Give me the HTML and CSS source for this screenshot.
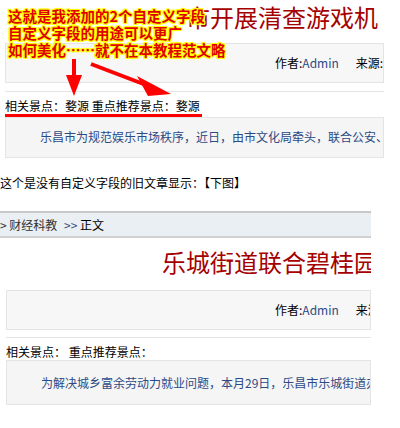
FILE: index.html
```
<!DOCTYPE html>
<html lang="zh-CN">
<head>
    <meta charset="UTF-8">
    <title>自定义字段显示</title>
    <link rel="stylesheet" href="styles.css">
</head>
<body>
<div class="page">
    <!--新文章：有自定义字段-->
    <div class="shot shot1">
        <div class="title title1">市开展清查游戏机</div>
        <div class="info info1">作者:<span class="blue">Admin</span><span class="from">来源:乐昌市文化局</span></div>
        <div class="related related1"><span class="mark">相关景点：婺源 重点推荐景点：婺源</span></div>
        <div class="content content1">乐昌市为规范娱乐市场秩序，近日，由市文化局牵头，联合公安、工商等部门</div>
    </div>

    <p class="note">这个是没有自定义字段的旧文章显示：【下图】</p>

    <!--旧文章：没有自定义字段-->
    <div class="shot shot2">
        <div class="crumb">&gt; 财经科教 <span class="arr">&gt;&gt;</span> <span class="cur">正文</span></div>
        <div class="title title2">乐城街道联合碧桂园开展招聘会</div>
        <div class="info info2">作者:<span class="blue">Admin</span><span class="from">来源:乐城街道办</span></div>
        <div class="related related2">相关景点： 重点推荐景点：</div>
        <div class="content content2">为解决城乡富余劳动力就业问题，本月29日，乐昌市乐城街道办事处</div>
    </div>

    <!--标注-->
    <div class="annot">
        <div class="annot-text">这就是我添加的2个自定义字段<br>自定义字段的用途可以更广<br>如何美化……就不在本教程范文略</div>
        <svg class="arrows" width="200" height="100" viewBox="0 0 200 100">
            <rect x="72" y="59" width="4" height="18" fill="#f00"/>
            <polygon points="66,75 82,75 74,96" fill="#f00"/>
            <line x1="91" y1="64" x2="146" y2="85" stroke="#f00" stroke-width="4"/>
            <polygon points="137,76 148,96 171,94" fill="#f00"/>
        </svg>
    </div>
</div>
</body>
</html>
```

FILE: styles.css
```
*{
    margin:0;
    padding:0;
    box-sizing:border-box;
}
body{
    font-family:"Noto Sans CJK SC", sans-serif;
    font-size:12px;
    color:#000;
    background:#fff;
}
.page{
    position:relative;
    width:400px;
    height:428px;
    overflow:hidden;
}
.shot{
    overflow:hidden;
    white-space:nowrap;
}
.shot1{
    width:384px;
}
.shot2{
    width:371px;
    margin-top:19px;
}
.title{
    font-size:24px;
    line-height:28px;
    color:#a50000;
    overflow:hidden;
}
.title1{
    height:43px;
    padding-top:3px;
    padding-left:186px;
}
.title2{
    height:52px;
    padding-top:10px;
    padding-left:162px;
}
.info{
    height:40px;
    line-height:38px;
    background:#f7f7f7;
    border:1px solid #e4e4e4;
    overflow:hidden;
}
.info1{
    margin-left:5px;
    padding-left:269px;
}
.info2{
    margin-left:6px;
    padding-left:268px;
}
.blue{
    color:#2b4a86;
}
.from{
    margin-left:17px;
}
.related{
    border-top:1px solid #e4e4e4;
    padding-top:5px;
    line-height:17px;
}
.related1{
    margin-top:8px;
    margin-left:5px;
}
.related2{
    margin-top:7px;
    margin-left:6px;
}
.mark{
    display:inline-block;
    border-bottom:3px solid #f00;
    padding-right:2px;
}
.content{
    background:#f5f5f5;
    border:1px solid #e4e4e4;
    color:#2b4a86;
    overflow:hidden;
}
.content1{
    margin-left:5px;
    height:41px;
    line-height:37px;
    padding-left:34px;
}
.content2{
    margin-left:6px;
    height:45px;
    line-height:43px;
    padding-left:34px;
}
.note{
    margin-top:16px;
    line-height:18px;
}
.crumb{
    height:27px;
    line-height:23px;
    background:#e9eff3;
    border-top:2px solid #c8c8c8;
    border-bottom:2px solid #d0d0d0;
    color:#333;
    font-size:12px;
}
.arr{
    color:#3a4a7a;
    margin-left:4px;
}
.cur{
    color:#000;
}
.annot{
    position:absolute;
    top:0;
    left:0;
    width:260px;
    height:100px;
}
.annot-text{
    position:absolute;
    top:7px;
    left:8px;
    font-size:14.5px;
    line-height:17px;
    font-weight:bold;
    color:#e00000;
    white-space:nowrap;
    text-shadow:1px 0 #ff0, -1px 0 #ff0, 0 1px #ff0, 0 -1px #ff0,
        1px 1px #ff0, -1px -1px #ff0, 1px -1px #ff0, -1px 1px #ff0,
        0 0 3px #ff0;
}
.arrows{
    position:absolute;
    top:0;
    left:0;
}
```
